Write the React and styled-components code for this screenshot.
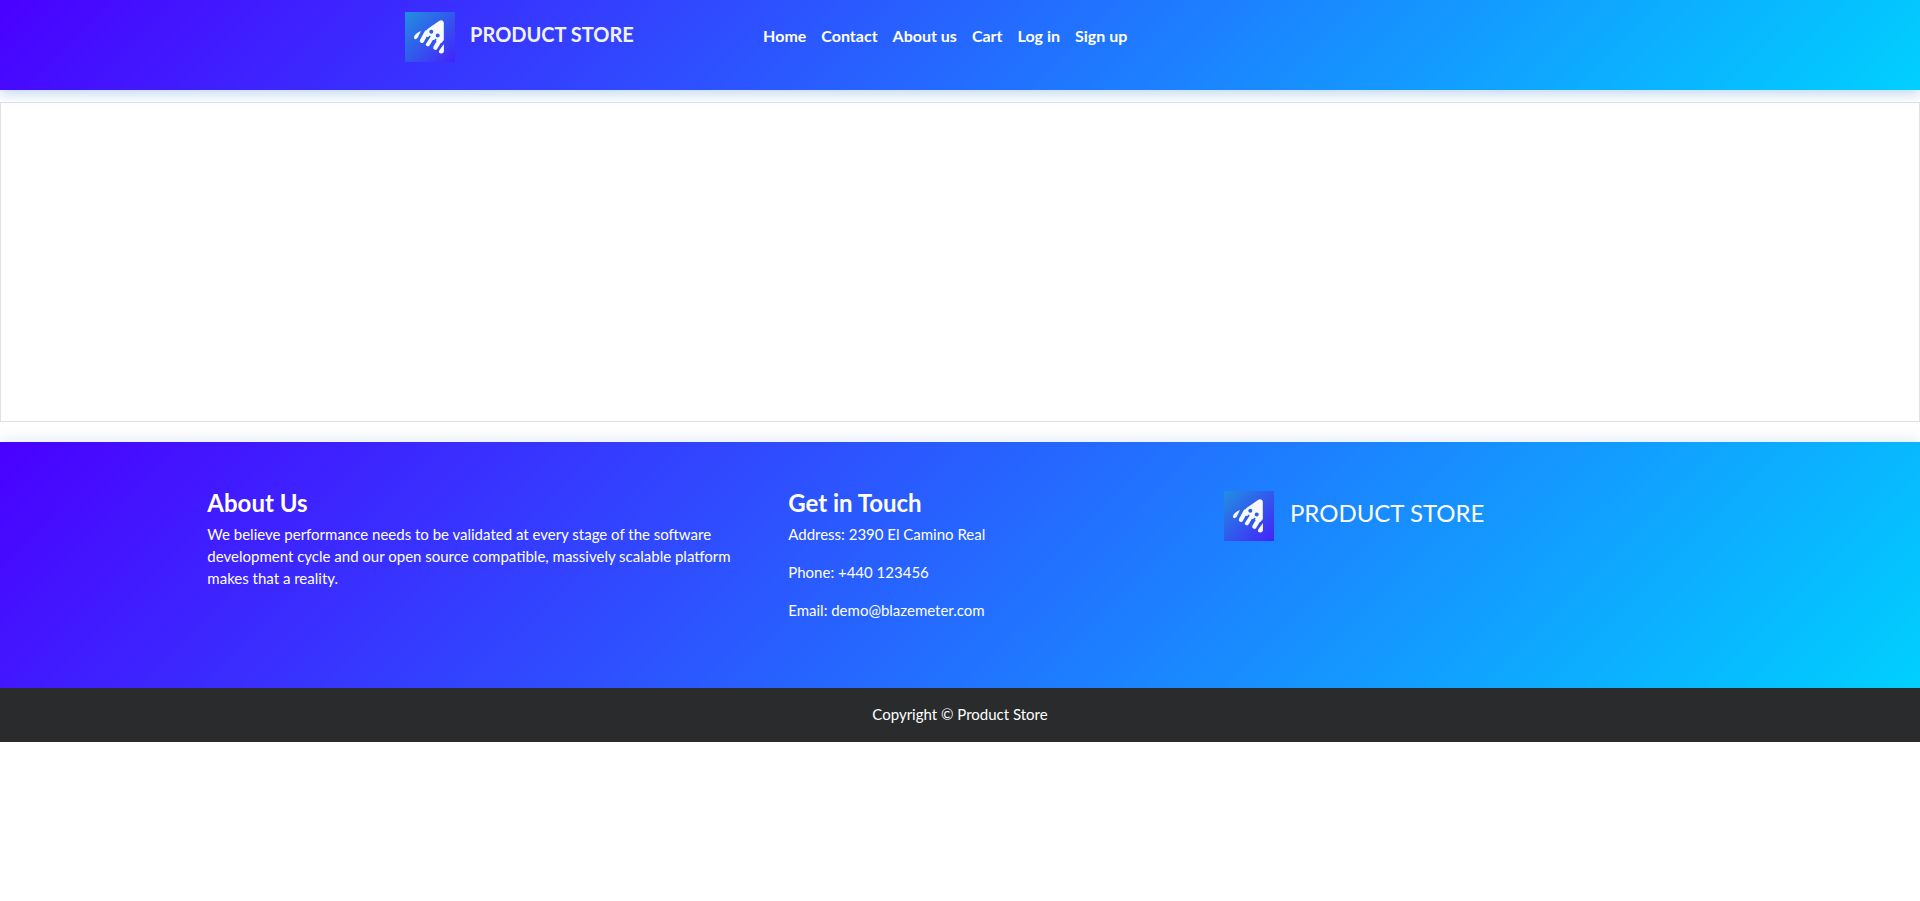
import React from "react";
import styled, { createGlobalStyle } from "styled-components";

const GlobalStyle = createGlobalStyle`
  *, *::before, *::after { box-sizing: border-box; }
  body {
    margin: 0;
    background: #fff;
    color: #fff;
    font-family: Lato, "Liberation Sans", sans-serif;
    font-size: 15px;
    line-height: 22px;
  }
  h2, p, ul { margin: 0; padding: 0; }
`;

const gradient = "linear-gradient(135deg, #4a00ff 0%, #00d0ff 100%)";

const Header = styled.header`
  display: grid;
  grid-template-columns: 358px 1fr;
  align-items: start;
  height: 90px;
  padding: 12px 0 0 21.1%;
  background: ${gradient};
  box-shadow: 0 4px 12px rgba(0, 100, 200, 0.25);
`;

const Brand = styled.a`
  display: flex;
  gap: ${(p) => (p.$bold ? 15 : 16)}px;
  color: ${(p) => (p.$bold ? "#f2f2ff" : "#fff")};
  font-size: ${(p) => (p.$bold ? 20 : 24)}px;
  font-weight: ${(p) => (p.$bold ? 700 : 400)};
  line-height: 44px;
  text-decoration: none;
`;

const LogoImage = styled.svg`
  display: block;
  flex: none;
  width: 50px;
  height: 50px;
`;

const NavList = styled.ul`
  display: flex;
  gap: 15px;
  padding-top: 13px;
  list-style: none;
`;

const NavLink = styled.a`
  color: #fff;
  font-size: 16px;
  font-weight: 700;
  text-decoration: none;
`;

const Panel = styled.main`
  height: 320px;
  margin: 12px 0 20px;
  border: 1px solid #dee2e6;
`;

const Footer = styled.footer`
  box-shadow: 0 -4px 12px rgba(0, 100, 200, 0.1);
`;

const Columns = styled.div`
  display: grid;
  grid-template-columns: 4fr 3fr 4fr;
  min-height: 246px;
  padding: 49px 6% 48px 10.8%;
  background: ${gradient};
`;

const Column = styled.section`
  padding-right: 30px;
`;

const Heading = styled.h2`
  margin-bottom: 9px;
  font-size: 24px;
  font-weight: 700;
  line-height: 23px;
`;

const Detail = styled.p`
  margin-bottom: 16px;
`;

const Copyright = styled.p`
  padding: 15px 16px 17px;
  background: #292b2c;
  text-align: center;
`;

function Logo({ id }) {
  return (
    <LogoImage viewBox="0 0 50 50" aria-hidden="true">
      <defs>
        <linearGradient id={id} x1="0" y1="0" x2="1" y2="1">
          <stop offset="0" stopColor="#2090e0" />
          <stop offset="1" stopColor="#4422fa" />
        </linearGradient>
      </defs>
      <rect width="50" height="50" fill={`url(#${id})`} />
      <g fill="#f7f9ff">
        <path d="M22.5 17L34 9Q37.5 7.2 38.8 10.5V28L36.5 31L27.5 27.5L19 23Z" />
        <path d="M16 19L12.5 26L10.5 27.3Q8.8 27.5 9 25Q10 21.5 16 19ZM38.9 32V39.5Q38.5 42 35 41.3Q33 40.5 34.5 38Z" />
      </g>
      <path d="M21.5 20.5L17 28.8M27 25L22.8 32M35 28L30.4 35.6" fill="none" stroke="#f7f9ff" strokeWidth="4.4" strokeLinecap="round" />
      <g fill="#2c5fe5">
        <circle cx="26.3" cy="19.7" r="2" />
        <circle cx="32.7" cy="23.5" r="2" />
      </g>
      <path d="M25 24L19.8 32M31 27L26.2 35" fill="none" stroke="#2f5ae6" strokeWidth="1.7" />
    </LogoImage>
  );
}

const links = ["Home", "Contact", "About us", "Cart", "Log in", "Sign up"];

export default function App() {
  return (
    <>
      <GlobalStyle />
      <Header>
        <Brand href="#" $bold><Logo id="header-logo" /><span>PRODUCT STORE</span></Brand>
        <nav>
          <NavList>
            {links.map((label) => <li key={label}><NavLink href="#">{label}</NavLink></li>)}
          </NavList>
        </nav>
      </Header>
      <Panel />
      <Footer>
        <Columns>
          <Column>
            <Heading>About Us</Heading>
            <p>We believe performance needs to be validated at every stage of the software development cycle and our open source compatible, massively scalable platform makes that a reality.</p>
          </Column>
          <Column>
            <Heading>Get in Touch</Heading>
            <Detail>Address: 2390 El Camino Real</Detail>
            <Detail>Phone: +440 123456</Detail>
            <Detail>Email: demo@blazemeter.com</Detail>
          </Column>
          <Column>
            <Brand href="#"><Logo id="footer-logo" /><span>PRODUCT STORE</span></Brand>
          </Column>
        </Columns>
        <Copyright>Copyright © Product Store</Copyright>
      </Footer>
    </>
  );
}
